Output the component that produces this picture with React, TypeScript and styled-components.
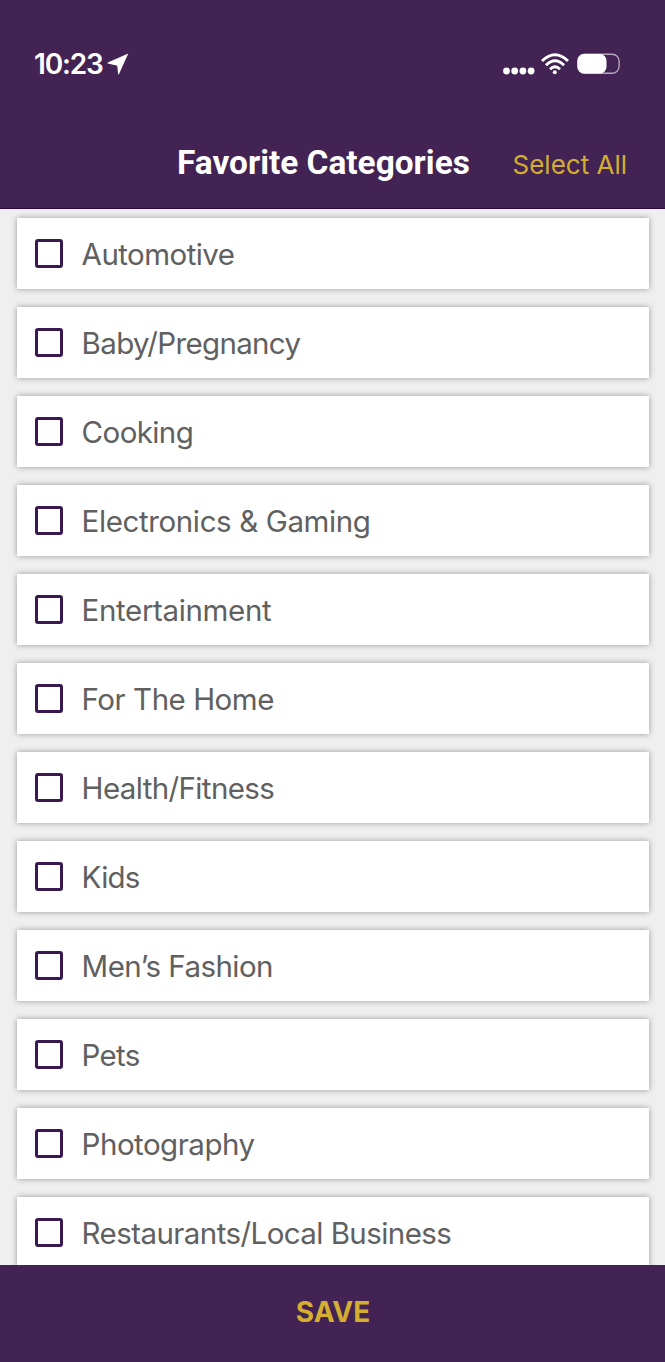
import React, { useState } from "react";
import styled, { createGlobalStyle } from "styled-components";

const GlobalStyle = createGlobalStyle`
  * { box-sizing: border-box; }
  body { margin: 0; background: #efefef; }
`;

const Screen = styled.div`
  width: 665px;
  height: 1362px;
  display: flex;
  flex-direction: column;
  overflow: hidden;
  background: #efefef;
  font-family: Inter, "Liberation Sans", sans-serif;
`;

const Header = styled.header`
  flex: none;
  height: 209px;
  background: #432353;
  border-bottom: 1px solid #2c0b42;
`;

const StatusBar = styled.div`
  height: 128px;
  padding: 0 45px 0 34px;
  display: flex;
  align-items: center;
  justify-content: space-between;
  color: #fff;
`;

const StatusGroup = styled.div`
  display: flex;
  align-items: center;
`;

const Clock = styled.span`
  width: 73px;
  font: 600 28px/34px Inter, sans-serif;
  letter-spacing: -1.2px;
  white-space: nowrap;
`;

const TitleBar = styled.div`
  height: 80px;
  display: grid;
  grid-template-columns: 177px 293px 1fr;
  padding-right: 38px;
`;

const Title = styled.h1`
  grid-column: 2;
  margin: 15px 0 0;
  font: 700 33.4px/40px Roboto, sans-serif;
  color: #fff;
  white-space: nowrap;
`;

const SelectAll = styled.button`
  justify-self: end;
  align-self: start;
  margin: 19px 0 0;
  padding: 0;
  border: 0;
  background: none;
  color: #d3ae30;
  font: 400 26px/36px Inter, sans-serif;
  white-space: nowrap;
`;

const List = styled.main`
  flex: 1;
  min-height: 0;
  overflow: hidden;
  padding: 9px 16px 0 17px;
  display: flex;
  flex-direction: column;
  gap: 18px;
`;

const Row = styled.label`
  flex: none;
  height: 71px;
  padding: 0 18px;
  display: flex;
  align-items: center;
  gap: 18.6px;
  background: #fff;
  box-shadow: 0 0 6px rgba(0, 0, 0, 0.36);
`;

const Box = styled.input`
  appearance: none;
  flex: none;
  width: 28px;
  height: 29px;
  margin: 0;
  border: 3px solid #3a1850;
  border-radius: 3px;
  &:checked { background: #3a1850; }
`;

const Label = styled.span<{ $spacing: number }>`
  font-size: 29.5px;
  line-height: 36px;
  font-weight: 400;
  color: #606060;
  letter-spacing: ${(p) => p.$spacing}px;
  white-space: nowrap;
`;

const SaveBar = styled.button`
  flex: none;
  height: 97px;
  border: 0;
  padding: 0 0 3px 1px;
  background: #432353;
  color: #d3ae30;
  font: 700 28px/36px Inter, sans-serif;
`;

const categories: [string, number][] = [
  ["Automotive", -0.55],
  ["Baby/Pregnancy", -0.65],
  ["Cooking", -0.6],
  ["Electronics & Gaming", -0.38],
  ["Entertainment", -0.36],
  ["For The Home", -0.47],
  ["Health/Fitness", -0.62],
  ["Kids", -0.75],
  ["Men’s Fashion", -0.55],
  ["Pets", -0.7],
  ["Photography", -0.5],
  ["Restaurants/Local Business", -0.57],
];

const LocationIcon = () => (
  <svg width="22" height="22" viewBox="0 0 22 22">
    <path d="M21.3 0.6 11.8 21.4Q11.2 21.6 11 20.8L10.3 12.8 0.8 10.6Q0 10 0.8 9.5Z" fill="#fff" />
  </svg>
);

const SignalDots = () => (
  <svg width="32" height="22" viewBox="0 0 32 22">
    {[3.5, 11.7, 19.9, 28.1].map((x) => (
      <circle key={x} cx={x} cy="18" r="3.4" fill="#fff" />
    ))}
  </svg>
);

const WifiSvg = styled.svg`
  margin: 0 8px 0 6px;
`;

const WifiIcon = () => (
  <WifiSvg width="28" height="22" viewBox="0 0 28 22">
    <g fill="none" stroke="#fff" strokeWidth="2.8">
      <path d="M1 8Q14-4.5 27 8" />
      <path d="M5 12.2Q14 3.4 23 12.2" />
      <path d="M9 16.3Q14 11.2 19 16.3" />
    </g>
    <circle cx="13.8" cy="19.3" r="2" fill="#fff" />
  </WifiSvg>
);

const BatteryIcon = () => (
  <svg width="43" height="22" viewBox="0 0 43 22">
    <rect x="0.7" y="1.2" width="41.4" height="19" rx="7" fill="none" stroke="#b5a8bd" strokeWidth="1.4" />
    <rect x="0.5" y="1" width="29" height="19.4" rx="6.5" fill="#fff" />
  </svg>
);

export default function App() {
  const [selected, setSelected] = useState<string[]>([]);
  const toggle = (name: string) =>
    setSelected((s) => (s.includes(name) ? s.filter((n) => n !== name) : [...s, name]));

  return (
    <Screen>
      <GlobalStyle />
      <Header>
        <StatusBar>
          <StatusGroup>
            <Clock>10:23</Clock>
            <LocationIcon />
          </StatusGroup>
          <StatusGroup>
            <SignalDots />
            <WifiIcon />
            <BatteryIcon />
          </StatusGroup>
        </StatusBar>
        <TitleBar>
          <Title>Favorite Categories</Title>
          <SelectAll onClick={() => setSelected(categories.map(([n]) => n))}>Select All</SelectAll>
        </TitleBar>
      </Header>
      <List>
        {categories.map(([name, spacing]) => (
          <Row key={name}>
            <Box type="checkbox" checked={selected.includes(name)} onChange={() => toggle(name)} />
            <Label $spacing={spacing}>{name}</Label>
          </Row>
        ))}
      </List>
      <SaveBar>SAVE</SaveBar>
    </Screen>
  );
}
